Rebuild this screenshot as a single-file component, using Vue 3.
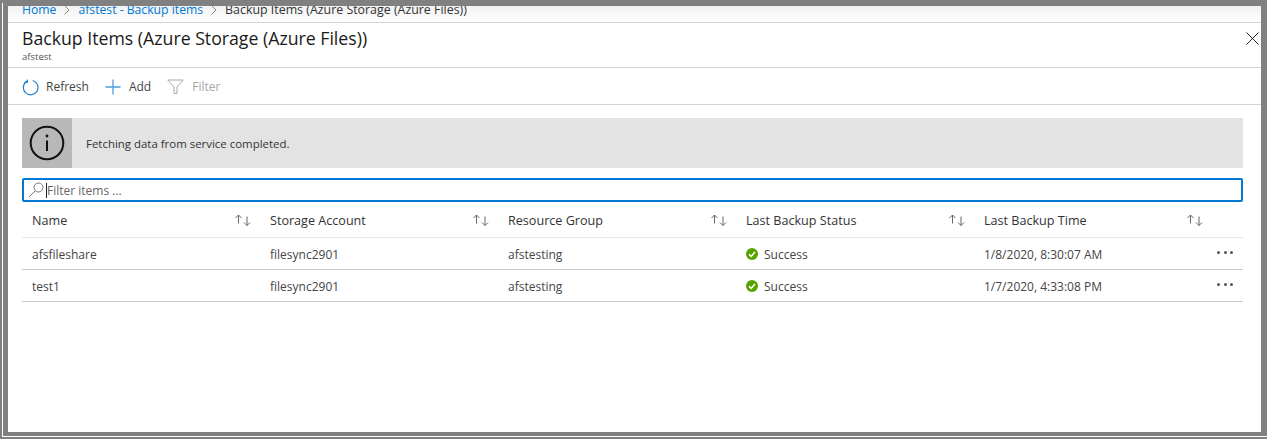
<template>
  <div class="frame">
    <div class="inner">
      <div class="blade">
        <nav class="crumbs">
          <a>Home</a>
          <svg class="crumb-sep" width="8" height="10" viewBox="0 0 8 10"><path d="M1.500 .5 6 5 1.500 9.500" fill="none" stroke="#8a8a8a" /></svg>
          <a>afstest - Backup items</a>
          <svg class="crumb-sep" width="8" height="10" viewBox="0 0 8 10"><path d="M1.500 .5 6 5 1.500 9.500" fill="none" stroke="#8a8a8a" /></svg>
          <span class="crumb-current">Backup Items (Azure Storage (Azure Files))</span>
        </nav>

        <header class="head">
          <div>
            <h1>Backup Items (Azure Storage (Azure Files))</h1>
            <div class="sub">afstest</div>
          </div>
          <svg class="close" width="13" height="13" viewBox="0 0 13 13"><path d="M.5 .5l12 12M12.500 .5l-12 12" stroke="#222" fill="none" /></svg>
        </header>

        <div class="toolbar">
          <div class="tool refresh">
            <svg width="17" height="17" viewBox="0 0 17 17">
              <path d="M5.200 2.100A7.300 7.300 0 1 0 10.700 1.500" fill="none" stroke="#1b7fd0" stroke-width="1.200" />
              <path d="M5.400 .4V3.200H2.400" fill="none" stroke="#1b7fd0" stroke-width="1.100" />
            </svg>
            Refresh
          </div>
          <div class="tool add">
            <svg width="16" height="16" viewBox="0 0 16 16"><path d="M8 .5v15M.5 8h15" stroke="#4a9ee0" stroke-width="1.300" fill="none" /></svg>
            Add
          </div>
          <div class="tool off">
            <svg width="17" height="16" viewBox="0 0 17 16"><path d="M.8 1h15.400L10 8v6.500H7V8z" fill="none" stroke="#a6a6a6" /></svg>
            Filter
          </div>
        </div>

        <main class="content">
          <div class="banner">
            <div class="banner-icon">
              <svg width="36" height="36" viewBox="0 0 36 36">
                <circle cx="18" cy="18" r="16.300" fill="none" stroke="#111" stroke-width="2" />
                <path d="M18 15.500v10.500" stroke="#111" stroke-width="2" />
                <circle cx="18" cy="11" r="1.400" fill="#111" />
              </svg>
            </div>
            <div class="banner-text">Fetching data from service completed.</div>
          </div>

          <div class="search">
            <svg width="16" height="16" viewBox="0 0 16 16">
              <circle cx="10.500" cy="5.500" r="4.500" fill="none" stroke="#777" />
              <path d="M7.200 8.800l-6 6" stroke="#777" fill="none" />
            </svg>
            <span class="caret"></span>
            <span class="placeholder">Filter items ...</span>
          </div>

          <div class="grid-row grid-head">
            <div v-for="col in columns" :key="col" class="cell">
              {{ col }}
              <svg width="16" height="12" viewBox="0 0 16 12">
                <path d="M3.500 9.500V1M.5 4l3-3 3 3M12 2.500V11.500M9 8.500l3 3 3-3" fill="none" stroke="#666" />
              </svg>
            </div>
            <div></div>
          </div>

          <div v-for="row in rows" :key="row.name" class="grid-row grid-item">
            <div class="cell">{{ row.name }}</div>
            <div class="cell">{{ row.account }}</div>
            <div class="cell">{{ row.group }}</div>
            <div class="cell status">
              <svg width="12" height="12" viewBox="0 0 12 12">
                <circle cx="6" cy="6" r="6" fill="#57a300" />
                <path d="M3 6.200 5.200 8.300 9 4" fill="none" stroke="#fff" stroke-width="1.500" />
              </svg>
              {{ row.status }}
            </div>
            <div class="cell">{{ row.time }}</div>
            <div class="more"><i></i><i></i><i></i></div>
          </div>
        </main>
      </div>
    </div>
  </div>
</template>

<script setup>
const columns = ['Name', 'Storage Account', 'Resource Group', 'Last Backup Status', 'Last Backup Time']

const rows = [
  { name: 'afsfileshare', account: 'filesync2901', group: 'afstesting', status: 'Success', time: '1/8/2020, 8:30:07 AM' },
  { name: 'test1', account: 'filesync2901', group: 'afstesting', status: 'Success', time: '1/7/2020, 4:33:08 PM' }
]
</script>

<style>
html,
body {
  margin: 0;
  background: #808080;
}
</style>

<style scoped>
.frame {
  box-sizing: border-box;
  width: 1267px;
  height: 439px;
  padding: 3px 0 2px 2px;
  background: #808080;
  font-family: "Open Sans", "Noto Sans", sans-serif;
  color: #333;
}

/* thin white line runs down the left and along the bottom of the capture */
.inner {
  box-sizing: border-box;
  height: 434px;
  padding: 3px 6px 0 0;
  border-left: 1px solid #fff;
  border-bottom: 1px solid #fff;
}

.blade {
  box-sizing: border-box;
  height: 430px;
  background: #fff;
  border-left: 5px solid #808080;
  border-bottom: 4px solid #808080;
  overflow: hidden;
}

.crumbs {
  display: flex;
  align-items: center;
  gap: 7px;
  box-sizing: border-box;
  height: 17px;
  padding: 0 0 8px 14px;
  font-size: 12.200px;
  line-height: 16px;
  background: linear-gradient(#f1f1f1, #fff);
  border-bottom: 1px solid #d4d4d4;
  white-space: nowrap;
  overflow: hidden;
}

.crumbs a {
  color: #0078d4;
}

.crumb-sep {
  flex: none;
}

.crumb-current {
  font-size: 12.400px;
}

.head {
  display: flex;
  justify-content: space-between;
  box-sizing: border-box;
  height: 45px;
  padding: 3px 2px 0 14px;
  border-bottom: 1px solid #d4d4d4;
}

h1 {
  margin: 0;
  font-size: 17.700px;
  font-weight: 400;
  line-height: 25px;
  color: #1a1a1a;
}

.sub {
  font-size: 9.500px;
  line-height: 11px;
  color: #555;
}

.close {
  margin-top: 6px;
}

.toolbar {
  display: flex;
  align-items: center;
  box-sizing: border-box;
  height: 37px;
  padding: 2px 0 0 14px;
  border-bottom: 1px solid #d4d4d4;
  font-size: 12px;
}

.tool {
  display: flex;
  align-items: center;
  gap: 7px;
  color: #444;
  line-height: 18px;
}

.add {
  margin-left: 16px;
  gap: 8px;
}

.off {
  margin-left: 16px;
  color: #a6a6a6;
  gap: 8px;
}

.content {
  padding: 13px 18px 0 14px;
}

.banner {
  display: flex;
  height: 50px;
  background: #e3e3e3;
}

.banner-icon {
  display: flex;
  align-items: center;
  justify-content: center;
  width: 50px;
  background: #b8b8b8;
}

.banner-text {
  display: flex;
  align-items: center;
  margin-left: 14px;
  font-size: 11.450px;
  color: #333;
}

.search {
  display: flex;
  align-items: center;
  box-sizing: border-box;
  height: 24px;
  margin-top: 10px;
  padding-left: 4px;
  border: 2px solid #0078d4;
  border-radius: 2px;
  font-size: 12px;
  color: #666;
}

.caret {
  width: 1px;
  height: 15px;
  margin-left: 2px;
  background: #222;
}

.grid-row {
  display: grid;
  grid-template-columns: repeat(5, 238px) 31px;
  align-items: center;
  box-sizing: border-box;
  font-size: 12px;
}

.grid-head {
  height: 36px;
  padding-top: 1px;
  border-bottom: 1px solid #e6e6e6;
  font-size: 12.600px;
  color: #333;
}

.grid-item {
  height: 32px;
  border-bottom: 1px solid #c8c8c8;
  color: #444;
}

.cell {
  display: flex;
  align-items: center;
  justify-content: space-between;
  padding: 0 9px 0 10px;
  white-space: nowrap;
}

.grid-item .cell {
  justify-content: flex-start;
  padding-top: 1px;
}

.status {
  gap: 6px;
}

.more {
  display: flex;
  gap: 3.500px;
  margin-bottom: 3px;
  margin-left: 5px;
}

.more i {
  width: 3px;
  height: 3px;
  border-radius: 50%;
  background: #555;
}
</style>
